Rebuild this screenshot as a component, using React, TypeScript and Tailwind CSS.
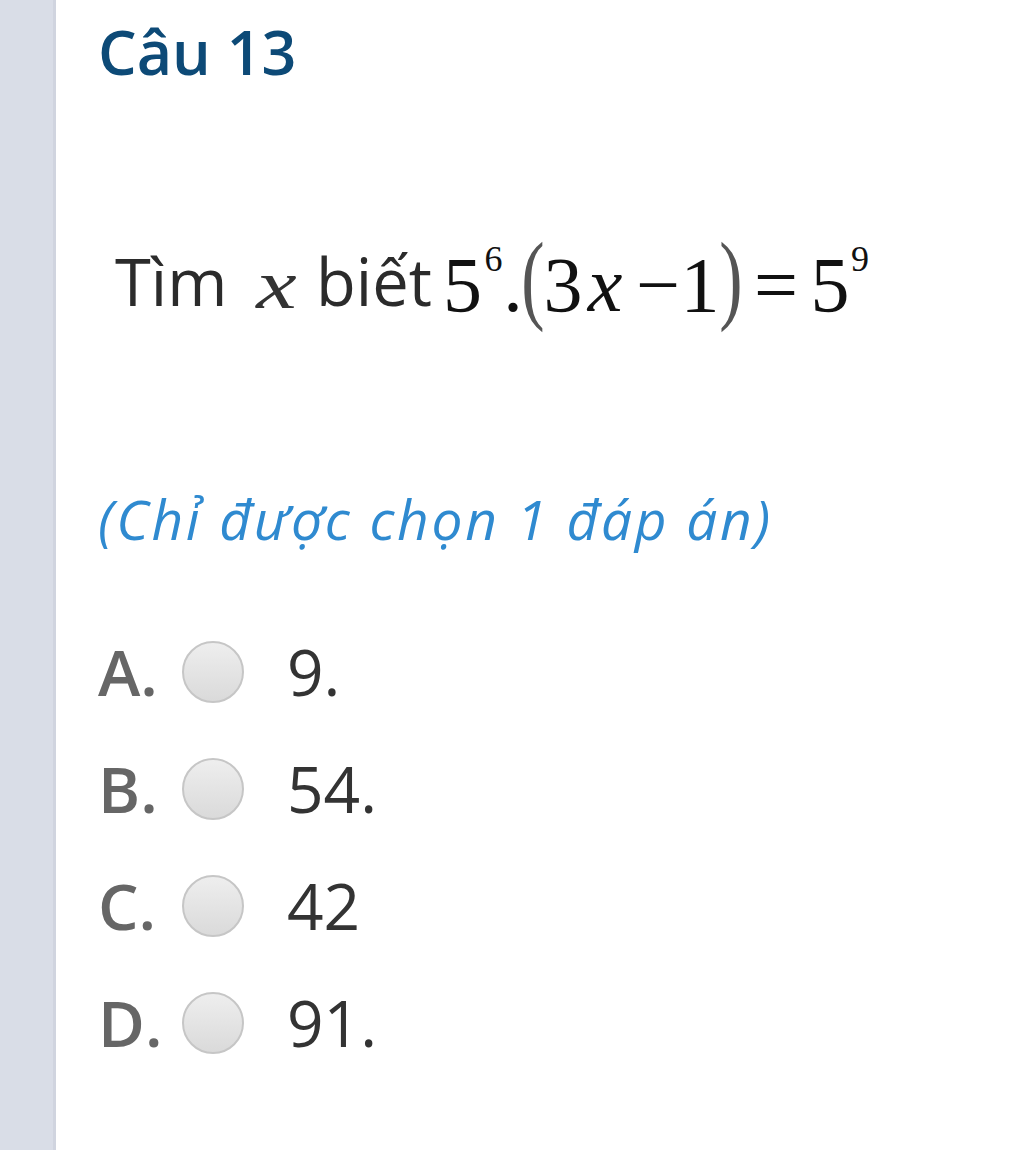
const options = [
  { label: 'A.', value: '9.' },
  { label: 'B.', value: '54.' },
  { label: 'C.', value: '42' },
  { label: 'D.', value: '91.' },
];

function Radio() {
  return (
    <span className="block h-[62px] w-[62px] shrink-0 rounded-full border-2 border-[#c6c6c6] bg-gradient-to-b from-[#eeeeee] to-[#dadada]" />
  );
}

// equation glyph box: centred, overflow spills evenly
function G({ w, className, children }: { w: string; className?: string; children: React.ReactNode }) {
  return <span className={`flex justify-center ${w} ${className ?? ''}`}>{children}</span>;
}

export default function App() {
  return (
    <div className="flex min-h-[1150px] w-[1024px] bg-white font-['Open_Sans',sans-serif]">
      <div className="w-[56px] shrink-0 border-r-[3px] border-[#d0d4df] bg-[#d9dde7]" />
      <div className="flex flex-1 flex-col pl-[42px]">
        <h1 className="pt-[21px] text-[61px] font-semibold leading-none text-[#0d4a77]">Câu 13</h1>

        <div className="mt-[153px] flex h-[100px] items-center pl-[17px] leading-none text-[#2b2b2b]">
          <span className="w-[123px] -translate-y-[4px] text-[65px]">Tìm</span>
          <G w="w-[78px]" className="font-['Liberation_Serif',serif] text-[70px] italic text-[#333]">
            <span className="scale-x-[1.3]">x</span>
          </G>
          <span className="w-[128px] -translate-y-[4px] text-[65px]">biết</span>
          <span className="flex items-center font-['Liberation_Serif',serif] text-[78px] text-[#111]">
            <G w="w-[37px]">5</G>
            <G w="w-[25px]" className="-translate-y-[26px] text-[36px]">6</G>
            <G w="w-[14px]">.</G>
            <G w="w-[26px]" className="-translate-y-[7px] scale-x-[0.7] text-[100px] text-[#555]">(</G>
            <G w="w-[34px]">3</G>
            <G w="w-[50px]" className="italic">x</G>
            <G w="w-[56px]">−</G>
            <G w="w-[28px]">1</G>
            <G w="w-[34px]" className="-translate-y-[7px] scale-x-[0.7] text-[100px] text-[#555]">)</G>
            <G w="w-[56px]">=</G>
            <G w="w-[52px]">5</G>
            <G w="w-[8px]" className="-translate-y-[26px] text-[36px]">9</G>
          </span>
        </div>

        <p className="mt-[156px] text-[55px] italic leading-none tracking-[2.7px] text-[#2f8ad0]">(Chỉ được chọn 1 đáp án)</p>

        <div className="mt-[94px] flex flex-col gap-[53px]">
          {options.map((o) => (
            <div key={o.label} className="flex items-center">
              <span className="w-[84px] text-[64px] font-semibold leading-none text-[#666]">{o.label}</span>
              <Radio />
              <span className="ml-[43px] text-[64px] leading-none text-[#333]">{o.value}</span>
            </div>
          ))}
        </div>
      </div>
    </div>
  );
}
